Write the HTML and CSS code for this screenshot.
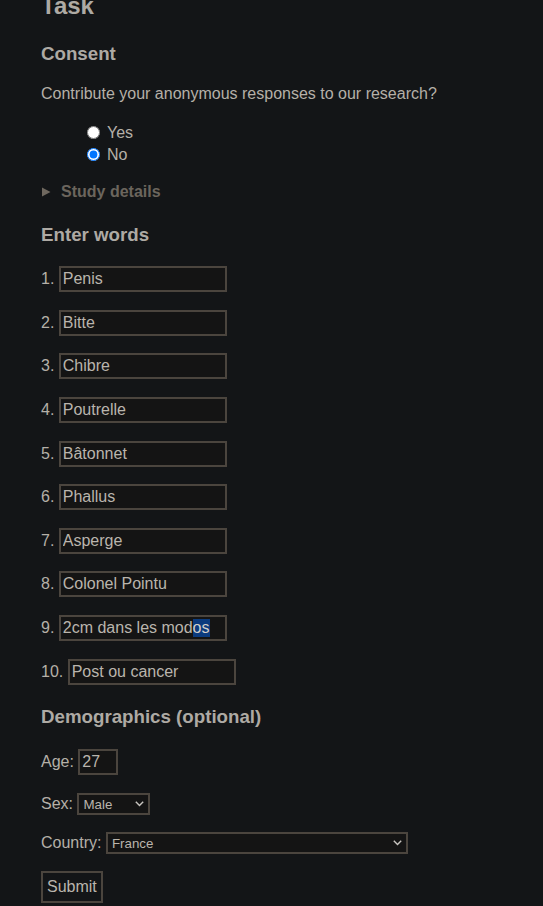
FILE: index.html
```html
<!DOCTYPE html>
<html lang="en">
<head>
<meta charset="utf-8">
<title>Task</title>
<link rel="stylesheet" href="styles.css">
</head>
<body>
<main class="page">
  <h1 class="title">Task</h1>

  <h2 class="section consent-h">Consent</h2>
  <p class="question">Contribute your anonymous responses to our research?</p>
  <div class="radios">
    <label class="radio-row"><input type="radio" name="consent" value="yes"><span>Yes</span></label>
    <label class="radio-row"><input type="radio" name="consent" value="no" checked><span>No</span></label>
  </div>
  <details class="details">
    <summary class="summary"><svg class="tri" width="9" height="10" viewBox="0 0 9 10"><polygon points="0,0.5 8.5,5 0,9.5" fill="#6f685f"/></svg>Study details</summary>
  </details>

  <h2 class="section words-h">Enter words</h2>
  <div class="words">
    <div class="word-row"><span class="num">1.</span><input class="field word" type="text" value="Penis"></div>
    <div class="word-row"><span class="num">2.</span><input class="field word" type="text" value="Bitte"></div>
    <div class="word-row"><span class="num">3.</span><input class="field word" type="text" value="Chibre"></div>
    <div class="word-row"><span class="num">4.</span><input class="field word" type="text" value="Poutrelle"></div>
    <div class="word-row"><span class="num">5.</span><input class="field word" type="text" value="Bâtonnet"></div>
    <div class="word-row"><span class="num">6.</span><input class="field word" type="text" value="Phallus"></div>
    <div class="word-row"><span class="num">7.</span><input class="field word" type="text" value="Asperge"></div>
    <div class="word-row"><span class="num">8.</span><input class="field word" type="text" value="Colonel Pointu"></div>
    <div class="word-row"><span class="num">9.</span><input class="field word" id="w9" type="text" value="2cm dans les modos"></div>
    <div class="word-row"><span class="num">10.</span><input class="field word" type="text" value="Post ou cancer"></div>
  </div>

  <h2 class="section demo-h">Demographics (optional)</h2>
  <div class="demo-row age-row"><span class="lbl">Age:</span><input class="field age" type="text" value="27"></div>
  <div class="demo-row sex-row"><span class="lbl">Sex:</span>
    <span class="select-wrap sex-wrap">
      <select class="sel sex"><option>Male</option><option>Female</option><option>Other</option></select>
      <svg class="chev" width="9" height="6" viewBox="0 0 9 6"><polyline points="0.8,0.8 4.5,4.6 8.2,0.8" fill="none" stroke="#c9c6c1" stroke-width="1.4"/></svg>
    </span>
  </div>
  <div class="demo-row country-row"><span class="lbl">Country:</span>
    <span class="select-wrap country-wrap">
      <select class="sel country"><option>France</option><option>Germany</option><option>Other</option></select>
      <svg class="chev" width="9" height="6" viewBox="0 0 9 6"><polyline points="0.8,0.8 4.5,4.6 8.2,0.8" fill="none" stroke="#c9c6c1" stroke-width="1.4"/></svg>
    </span>
  </div>
  <button class="submit" type="button">Submit</button>
</main>
<script src="script.js"></script>
</body>
</html>
```
FILE: styles.css
```css
html, body {
  margin: 0;
  padding: 0;
  background: #131517;
}
body {
  font-family: "Liberation Sans", Arial, sans-serif;
  font-size: 16px;
  color: #b5b0a8;
  overflow: hidden;
}
.page {
  padding: 0 41px;
  margin-top: -8px;
}
.title {
  font-size: 24px;
  line-height: 27.6px;
  margin: 0;
  color: #aeaaa4;
}
.section {
  font-size: 18.72px;
  line-height: 21.5px;
  font-weight: bold;
  color: #aeaaa4;
  margin: 0;
}
.consent-h { margin-top: 23px; }
.question {
  margin: 21px 0 0;
  line-height: 18.4px;
}
.radios {
  margin-top: 18.3px;
  padding-left: 41px;
  display: flex;
  flex-direction: column;
}
.radio-row {
  height: 22px;
  display: flex;
  align-items: center;
}
.radio-row input {
  margin: 0 7px 0 5px;
  width: 13px;
  height: 13px;
}
.details {
  margin-top: 17.5px;
}
.summary {
  list-style: none;
  display: flex;
  align-items: center;
  height: 18.4px;
  font-weight: bold;
  color: #6b655d;
  cursor: pointer;
}
.summary::-webkit-details-marker { display: none; }
.tri {
  display: block;
  flex: none;
  margin: 0 10px 1px 1px;
}
.words-h { margin-top: 22.8px; }
.words {
  margin-top: 20.2px;
  display: flex;
  flex-direction: column;
  gap: 17.6px;
}
.word-row, .demo-row {
  display: flex;
  align-items: center;
  height: 26px;
}
.num, .lbl {
  margin-right: 4.45px;
}
.field {
  box-sizing: border-box;
  height: 26px;
  border: 2px solid #4b453e;
  background: #141414;
  color: #bab5ad;
  font-family: "Liberation Sans", Arial, sans-serif;
  font-size: 16px;
  padding: 1px 2px;
  margin: 0;
  outline: none;
}
.field::selection {
  background: #0b3b7e;
  color: #d4d0ca;
}
.word { width: 168px; }
.demo-h { margin-top: 21.6px; }
.age-row { margin-top: 21.5px; }
.age { width: 40px; }
.sex-row { margin-top: 18px; height: 22px; }
.country-row { margin-top: 17px; height: 22px; }
.select-wrap {
  position: relative;
  display: inline-flex;
}
.sel {
  appearance: none;
  -webkit-appearance: none;
  box-sizing: border-box;
  height: 21.5px;
  border: 2px solid #4b453e;
  border-radius: 0;
  background: #141414;
  color: #bab5ad;
  font-family: "Liberation Sans", Arial, sans-serif;
  font-size: 13.33px;
  padding: 0 4px;
  margin: 0;
  outline: none;
}
.sex { width: 72.5px; }
.country { width: 302.5px; }
.chev {
  position: absolute;
  right: 6px;
  top: 8px;
  pointer-events: none;
}
.submit {
  display: block;
  margin-top: 16.7px;
  box-sizing: border-box;
  height: 32px;
  padding: 0 4px;
  border: 2px solid #4b453e;
  border-radius: 0;
  background: #131517;
  color: #bab5ad;
  font-family: "Liberation Sans", Arial, sans-serif;
  font-size: 16px;
}
```
FILE: script.js
```js
window.addEventListener('load', function () {
  var el = document.getElementById('w9');
  el.focus();
  el.setSelectionRange(16, 18);
});
```
